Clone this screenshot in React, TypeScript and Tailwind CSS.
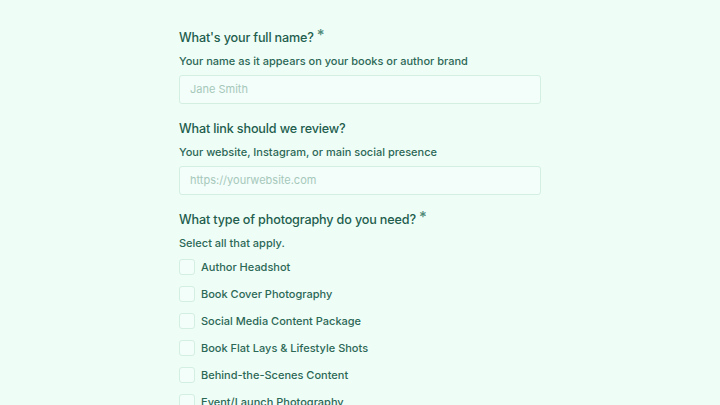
import React from "react";

const options = [
  "Author Headshot",
  "Book Cover Photography",
  "Social Media Content Package",
  "Book Flat Lays & Lifestyle Shots",
  "Behind-the-Scenes Content",
  "Event/Launch Photography",
];

function Heading({ text, required }: { text: string; required?: boolean }) {
  return (
    <div className="flex h-[20px] items-center pt-[2px] text-[12.6px] font-[550] leading-[20px] tracking-[-0.15px] text-[#225e4d]">
      <span>{text}</span>
      {required && (
        <span className="ml-[3px] -mt-[6px] text-[15px] leading-[14px] font-medium text-[#4f8a78]">*</span>
      )}
    </div>
  );
}

function Desc({ text }: { text: string }) {
  return (
    <div className="mt-[6px] h-[16px] text-[11px] font-[450] leading-[16px] text-[#2c6856]">{text}</div>
  );
}

function Input({ placeholder }: { placeholder: string }) {
  return (
    <div className="mt-[6px] flex h-[29px] items-center rounded-[3px] border border-[#d3efe2] bg-[#f3fefa] px-[10px] text-[11px] text-[#a6c8ba]">
      {placeholder}
    </div>
  );
}

export default function App() {
  return (
    <div
      className="h-[405px] w-full overflow-hidden bg-[#effdf7]"
      style={{ fontFamily: "Inter, 'Noto Sans', sans-serif" }}
    >
      <div className="mx-auto w-[362px] pt-[27px]">
        <Heading text="What's your full name?" required />
        <Desc text="Your name as it appears on your books or author brand" />
        <Input placeholder="Jane Smith" />

        <div className="mt-[14px]">
          <Heading text="What link should we review?" />
        </div>
        <Desc text="Your website, Instagram, or main social presence" />
        <Input placeholder="https://yourwebsite.com" />

        <div className="mt-[14px]">
          <Heading text="What type of photography do you need?" required />
        </div>
        <Desc text="Select all that apply." />
        <div className="mt-[7px] flex flex-col gap-[9px]">
          {options.map((o) => (
            <div key={o} className="flex h-[18px] items-center gap-[6px]">
              <div className="h-[16px] w-[16px] shrink-0 rounded-[3px] border border-[#d3efe2] bg-[#f3fefa]" />
              <span className="text-[11px] font-[450] leading-[18px] text-[#2c6856]">{o}</span>
            </div>
          ))}
        </div>
      </div>
    </div>
  );
}
